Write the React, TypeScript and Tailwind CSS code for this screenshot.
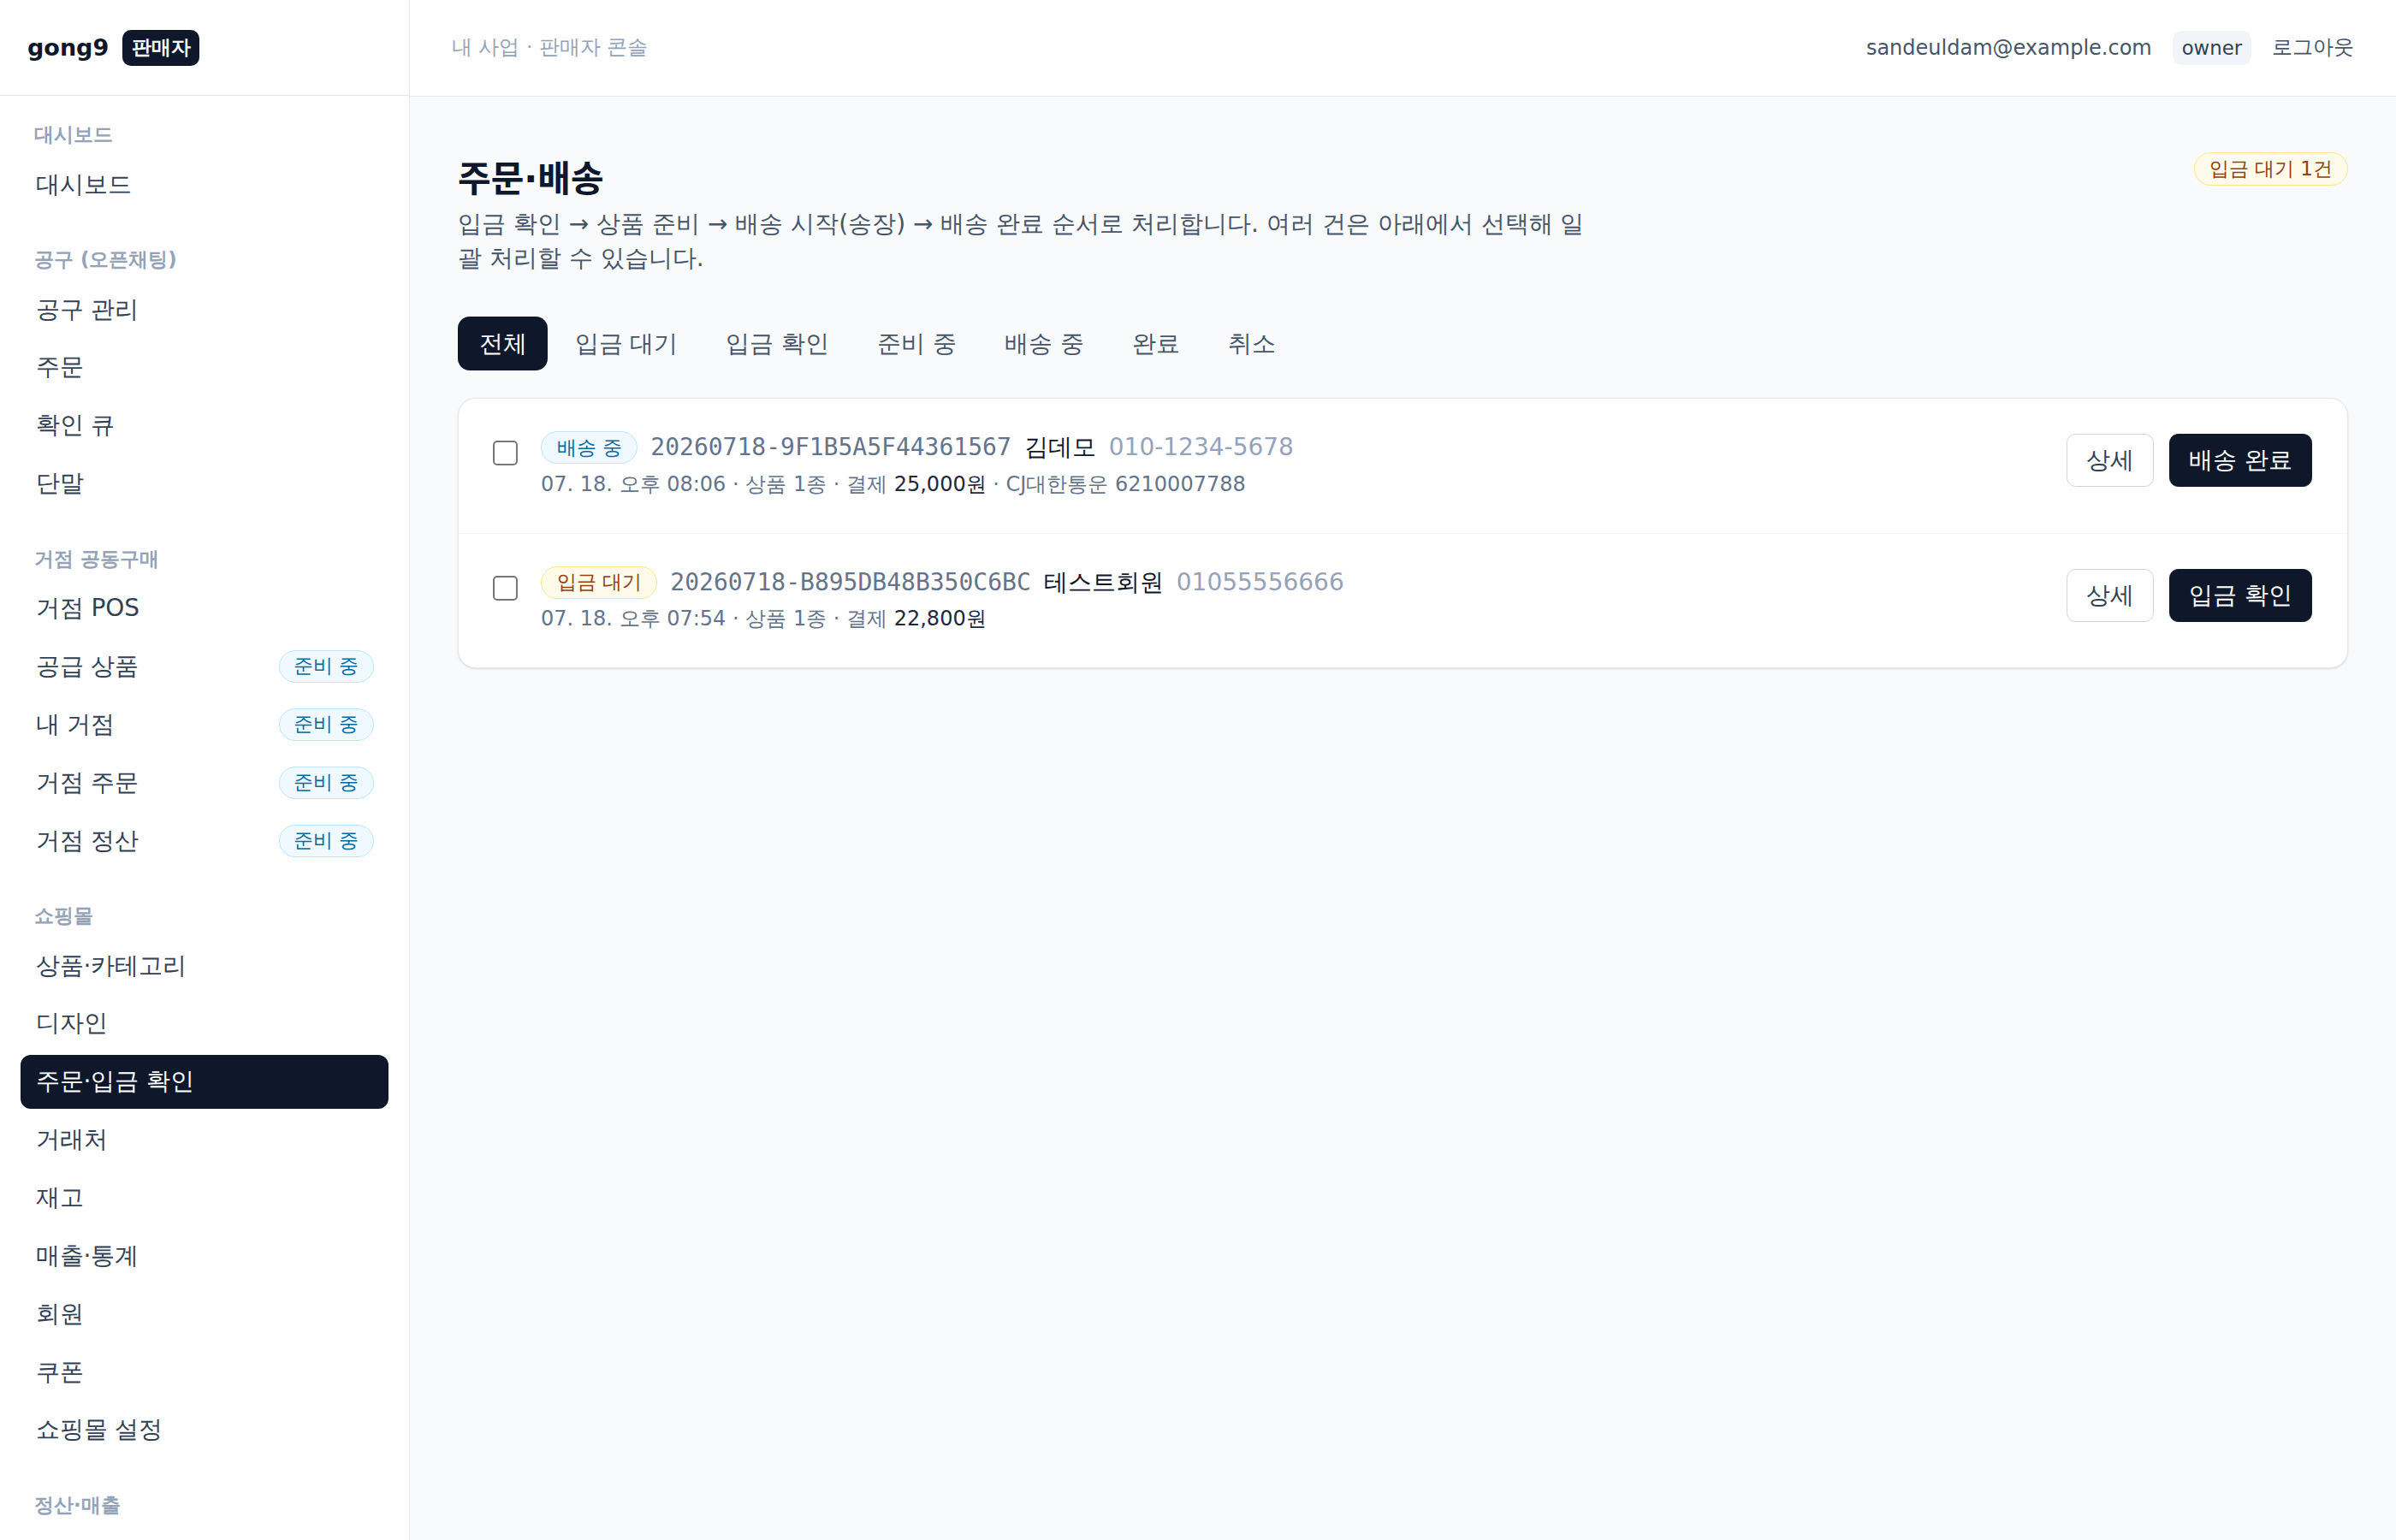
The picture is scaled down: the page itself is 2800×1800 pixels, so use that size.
import React from 'react';

type NavItem = { label: string; badge?: boolean; active?: boolean };
type NavSection = { title: string; items: NavItem[] };

const navSections: NavSection[] = [
  { title: '대시보드', items: [{ label: '대시보드' }] },
  {
    title: '공구 (오픈채팅)',
    items: [{ label: '공구 관리' }, { label: '주문' }, { label: '확인 큐' }, { label: '단말' }],
  },
  {
    title: '거점 공동구매',
    items: [
      { label: '거점 POS' },
      { label: '공급 상품', badge: true },
      { label: '내 거점', badge: true },
      { label: '거점 주문', badge: true },
      { label: '거점 정산', badge: true },
    ],
  },
  {
    title: '쇼핑몰',
    items: [
      { label: '상품·카테고리' },
      { label: '디자인' },
      { label: '주문·입금 확인', active: true },
      { label: '거래처' },
      { label: '재고' },
      { label: '매출·통계' },
      { label: '회원' },
      { label: '쿠폰' },
      { label: '쇼핑몰 설정' },
    ],
  },
  { title: '정산·매출', items: [] },
];

const tabs = ['전체', '입금 대기', '입금 확인', '준비 중', '배송 중', '완료', '취소'];

type Order = {
  status: 'shipping' | 'pending';
  id: string;
  name: string;
  phone: string;
  time: string;
  amount: string;
  courier?: string;
  action: string;
};

const orders: Order[] = [
  {
    status: 'shipping',
    id: '20260718-9F1B5A5F44361567',
    name: '김데모',
    phone: '010-1234-5678',
    time: '07. 18. 오후 08:06',
    amount: '25,000원',
    courier: 'CJ대한통운 6210007788',
    action: '배송 완료',
  },
  {
    status: 'pending',
    id: '20260718-B895DB48B350C6BC',
    name: '테스트회원',
    phone: '01055556666',
    time: '07. 18. 오후 07:54',
    amount: '22,800원',
    action: '입금 확인',
  },
];

function StatusBadge({ status }: { status: Order['status'] }) {
  if (status === 'shipping') {
    return (
      <span className="flex h-[38px] shrink-0 items-center rounded-full border border-[#bae6fd] bg-[#f0f9ff] px-[17.5px] text-[23px] leading-none text-[#0369a1]">
        배송 중
      </span>
    );
  }
  return (
    <span className="flex h-[38px] shrink-0 items-center rounded-full border border-[#fde68a] bg-[#fffbeb] px-[17.5px] text-[23px] leading-none text-[#92400e]">
      입금 대기
    </span>
  );
}

function Sidebar() {
  return (
    <aside className="flex w-[479px] shrink-0 flex-col overflow-hidden border-r border-[#e2e8f0] bg-white">
      <div className="flex h-[112px] shrink-0 items-center gap-[16px] border-b border-[#e2e8f0] px-[32px]">
        <span className="text-[27px] font-bold leading-none text-[#0f172a]">gong9</span>
        <span className="flex h-[42px] items-center rounded-[10px] bg-[#0f172a] px-[10.5px] text-[23px] font-bold leading-none text-white">
          판매자
        </span>
      </div>
      <nav className="flex flex-col gap-[42px] px-[24px] pt-[31px]">
        {navSections.map((section) => (
          <div key={section.title}>
            <div className="mb-[13px] px-[16px] text-[22.75px] font-semibold leading-[28px] text-[#94a3b8]">
              {section.title}
            </div>
            <div className="flex flex-col gap-[4.86px]">
              {section.items.map((item) => (
                <div
                  key={item.label}
                  className={
                    item.active
                      ? 'flex h-[63px] items-center justify-between rounded-[12px] bg-[#0f172a] px-[17.5px] text-[28px] leading-[42px] text-white'
                      : 'flex h-[63px] items-center justify-between rounded-[12px] px-[17.5px] text-[28px] leading-[42px] text-[#334155]'
                  }
                >
                  <span>{item.label}</span>
                  {item.badge && (
                    <span className="flex h-[38px] items-center rounded-full border border-[#bae6fd] bg-[#f0f9ff] px-[16px] text-[23px] leading-none text-[#0369a1]">
                      준비 중
                    </span>
                  )}
                </div>
              ))}
            </div>
          </div>
        ))}
      </nav>
    </aside>
  );
}

function OrderRow({ order, first }: { order: Order; first: boolean }) {
  return (
    <div
      className={
        first
          ? 'flex items-start justify-between pb-[39px] pl-[40px] pr-[41px] pt-[36px]'
          : 'flex items-start justify-between border-t border-[#f1f5f9] pb-[39px] pl-[40px] pr-[41px] pt-[36px]'
      }
    >
      <div className="flex items-start gap-[27px]">
        <input
          type="checkbox"
          className="mt-[13px] h-[29px] w-[29px] shrink-0 appearance-none rounded-[5px] border-2 border-[#767676] bg-white"
        />
        <div>
          <div className="flex h-[42px] items-center gap-[15px] text-[28px] leading-[42px]">
            <StatusBadge status={order.status} />
            <span className="font-['DejaVu_Sans_Mono',monospace] text-[#64748b]">{order.id}</span>
            <span className="text-[#0f172a]">{order.name}</span>
            <span className="text-[#94a3b8]">{order.phone}</span>
          </div>
          <div className="mt-[4.5px] text-[24px] leading-[35px] text-[#64748b]">
            {order.time} · 상품 1종 · 결제 <span className="text-[#1e293b]">{order.amount}</span>
            {order.courier && <> · {order.courier}</>}
          </div>
        </div>
      </div>
      <div className="mt-[5px] flex gap-[18px]">
        <button className="flex h-[62px] items-center rounded-[10.5px] border border-[#cbd5e1] bg-white px-[22px] text-[28px] leading-[42px] text-[#334155]">
          상세
        </button>
        <button className="flex h-[62px] items-center rounded-[10.5px] border border-[#0f172a] bg-[#0f172a] px-[22px] text-[28px] leading-[42px] text-white">
          {order.action}
        </button>
      </div>
    </div>
  );
}

export default function App() {
  return (
    <div className="flex h-screen overflow-hidden bg-[#f8fafc] font-['DejaVu_Sans',sans-serif]">
      <Sidebar />
      <main className="flex min-w-0 flex-1 flex-col">
        <header className="flex h-[113px] shrink-0 items-center justify-between border-b border-[#e2e8f0] bg-white px-[49px]">
          <span className="text-[23.6px] text-[#94a3b8]">내 사업 · 판매자 콘솔</span>
          <div className="flex items-center gap-[24.5px]">
            <span className="text-[24px] text-[#475569]">sandeuldam@example.com</span>
            <span className="flex h-[40px] items-center rounded-[10.5px] bg-[#f1f5f9] px-[10.5px] text-[22.75px] leading-none text-[#334155]">
              owner
            </span>
            <span className="text-[23.6px] text-[#475569]">로그아웃</span>
          </div>
        </header>

        <section className="px-[56px] pt-[65px]">
          <div className="flex items-start justify-between gap-[28px]">
            <div>
              <h1 className="mt-[4px] font-['DejaVu_Sans','Noto_Sans_CJK_KR',sans-serif] text-[42px] font-bold leading-[56px] text-[#0f172a]">
                주문·배송
              </h1>
              <p className="mt-[4px] max-w-[1330px] text-[28px] leading-[40px] text-[#475569]">
                입금 확인 → 상품 준비 → 배송 시작(송장) → 배송 완료 순서로 처리합니다. 여러 건은 아래에서 선택해 일괄 처리할 수 있습니다.
              </p>
            </div>
            <span className="flex h-[39px] shrink-0 items-center rounded-full border border-[#fde68a] bg-[#fffbeb] px-[17px] text-[23px] leading-none text-[#92400e]">
              입금 대기 1건
            </span>
          </div>

          <div className="mt-[48px] flex gap-[7px]">
            {tabs.map((tab, i) => (
              <button
                key={tab}
                className={
                  i === 0
                    ? 'flex h-[63px] items-center rounded-[14px] bg-[#0f172a] px-[24.5px] text-[28px] leading-[42px] text-white'
                    : 'flex h-[63px] items-center rounded-[14px] px-[24.5px] text-[28px] leading-[42px] text-[#475569]'
                }
              >
                {tab}
              </button>
            ))}
          </div>

          <div className="mt-[32px] overflow-hidden rounded-[21px] border border-[#e2e8f0] bg-white shadow-sm">
            {orders.map((order, i) => (
              <OrderRow key={order.id} order={order} first={i === 0} />
            ))}
          </div>
        </section>
      </main>
    </div>
  );
}
